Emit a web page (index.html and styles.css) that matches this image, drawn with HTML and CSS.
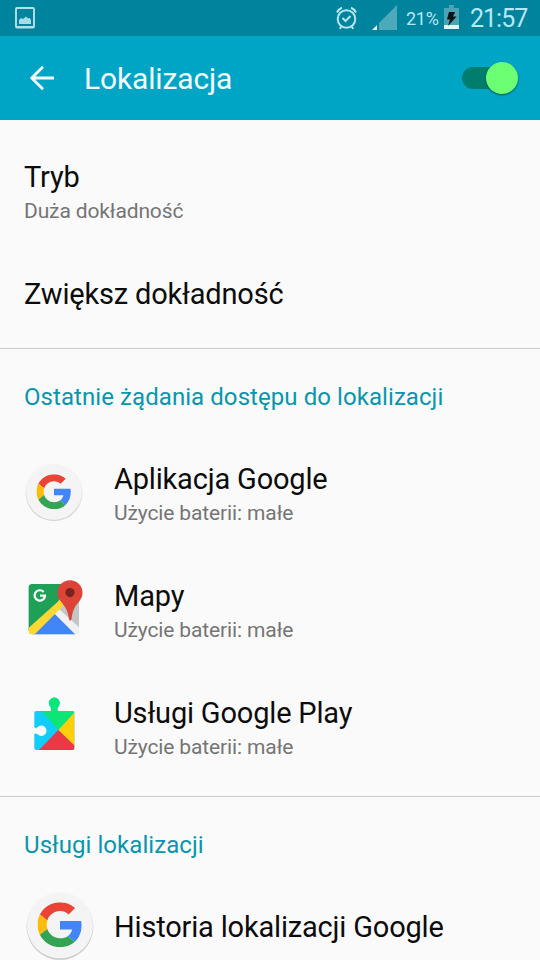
FILE: index.html
```html
<!DOCTYPE html>
<html lang="pl">
<head>
<meta charset="utf-8">
<title>Lokalizacja</title>
<link rel="stylesheet" href="styles.css">
</head>
<body>
<svg class="defs" width="0" height="0">
  <symbol id="g" viewBox="0 0 48 48">
    <path fill="#e94435" d="M24 9.5c3.54 0 6.71 1.22 9.21 3.6l6.85-6.85C35.9 2.38 30.47 0 24 0 14.62 0 6.51 5.38 2.56 13.22l7.98 6.19C12.43 13.72 17.74 9.5 24 9.5z"/>
    <path fill="#4285f4" d="M46.98 24.55c0-1.57-.15-3.09-.38-4.55H24v9.02h12.94c-.58 2.96-2.26 5.48-4.78 7.18l7.73 6c4.51-4.18 7.09-10.36 7.09-17.65z"/>
    <path fill="#fbbc05" d="M10.53 28.59c-.48-1.45-.76-2.99-.76-4.59s.27-3.14.76-4.59l-7.98-6.19C.92 16.46 0 20.12 0 24c0 3.88.92 7.54 2.56 10.78l7.97-6.19z"/>
    <path fill="#34a353" d="M24 48c6.48 0 11.93-2.13 15.89-5.81l-7.73-6c-2.15 1.45-4.92 2.3-8.16 2.3-6.26 0-11.57-4.22-13.47-9.91l-7.98 6.19C6.51 42.62 14.62 48 24 48z"/>
  </symbol>
</svg>
<div class="status">
  <svg class="shot" width="20" height="22" viewBox="0 0 20 22"><rect x="1" y="1" width="18" height="19.6" rx="1" fill="none" stroke="#b5dee7" stroke-width="1.9"/><path d="M1 19h18v2H1z" fill="#b5dee7"/><path d="M4 17v-4l2-2 2 1 3-2.500 2 2 1.500-.8L16 13v4z" fill="#a5dce6"/></svg>
  <svg class="alarm" width="22" height="24" viewBox="0 0 22 24" fill="none" stroke="#b5e5f0" stroke-width="2"><circle cx="10.500" cy="13" r="8.800"/><path d="M1 6.500Q2.500 3 6 1.700M15 1.700Q18.500 3 20 6.500M6.500 12l3 3 5-5M5 20.500l-1 2.500M16 20.500l1 2.500"/></svg>
  <svg class="signal" width="26" height="26" viewBox="0 0 26 26"><path d="M25 0v25H7V18z" fill="#4ba9ba"/><path d="M5 20v5H0z" fill="#e5f5f8"/></svg>
  <span class="pct">21%</span>
  <svg class="battery" width="15" height="24" viewBox="0 0 15 24"><path d="M5 0h5v3h5v17H0V3h5z" fill="#4ba3b3"/><path d="M0 20h15v4H0z" fill="#e5f5f8"/><path d="M5 7h6L9 11.500h3.500L4 21l2-6.500H3z" fill="#061318"/></svg>
  <span class="time">21:57</span>
</div>
<header class="bar">
  <svg class="back" width="24" height="24" viewBox="0 0 24 24" fill="none" stroke="#f2fbfd" stroke-width="2.800"><path d="M24 12H2.500M13 .8L1.800 12 13 23.200"/></svg>
  <h1>Lokalizacja</h1>
  <div class="toggle"><i class="thumb"></i></div>
</header>
<main>
  <div class="row"><div class="text"><div class="title">Tryb</div><div class="sub">Duża dokładność</div></div></div>
  <div class="row single"><div class="text"><div class="title">Zwiększ dokładność</div></div></div>
  <section>
    <h2>Ostatnie żądania dostępu do lokalizacji</h2>
    <div class="row app">
      <svg class="icon" viewBox="0 0 72 72"><circle cx="36" cy="36.800" r="28.400" fill="#d8d8d8"/><circle cx="36" cy="35.800" r="28" fill="#f4f4f4"/><use href="#g" x="18.500" y="18.200" width="35" height="35"/></svg>
      <div class="text"><div class="title">Aplikacja Google</div><div class="sub">Użycie baterii: małe</div></div>
    </div>
    <div class="row app">
      <svg class="icon" viewBox="0 0 72 72">
        <clipPath id="mc"><rect x="10.700" y="11" width="50.300" height="50.300" rx="3.500"/></clipPath>
        <g clip-path="url(#mc)"><path fill="#c4c5c7" d="M10 10h52v52H10z"/><path fill="#1fa057" d="M10 10h42L38 32 10 58z"/><path fill="#4285f4" d="M36.500 40.500L58.500 62.500H14z"/><path fill="#f1f1f1" d="M36.500 40.500L41 36 64 57v8h-3z"/><path fill="#fdd835" d="M6 59L44 25l5 4L15 63H6z"/></g>
        <path d="M25.700 19A5.200 5.200 0 1 0 27 22.600H22" fill="none" stroke="#fff" stroke-width="2.200"/>
        <path fill="#db4437" d="M52 7.200A12.500 12.500 0 0 1 64.500 19.700C64.500 26 60 29 57 34c-2.300 4-3 8-3.500 12-.3 2-2.200 2-2.500 0-.6-4-1.500-8-4-12-3-5-7.500-8-7.500-14.300A12.500 12.500 0 0 1 52 7.200z"/><circle cx="52" cy="19.600" r="4.600" fill="#7b231e"/>
      </svg>
      <div class="text"><div class="title">Mapy</div><div class="sub">Użycie baterii: małe</div></div>
    </div>
    <div class="row app">
      <svg class="icon" viewBox="0 0 72 72">
        <clipPath id="pc"><path d="M18.300 21H32.500q1.500-1.500 0-4a5.500 5.500 0 1 1 7.600 0Q38.600 19.500 40.100 21H54.300a2 2 0 0 1 2 2V58a2 2 0 0 1-2 2H18.300a2 2 0 0 1-2-2V44q1.500-1.200 3.200.2a5.200 5.200 0 1 0 0-7Q17.800 38.500 16.300 37.300V23a2 2 0 0 1 2-2z"/></clipPath>
        <g clip-path="url(#pc)"><path fill="#12ccfa" d="M10 5h50v60H10z"/><path fill="#0ee577" d="M22.700 20V5H60V20L40.300 40z"/><path fill="#ffcf0a" d="M57 22L40.300 40 57 57z"/><path fill="#eb3847" d="M40.300 40L20 61H60V59z"/></g>
      </svg>
      <div class="text"><div class="title">Usługi Google Play</div><div class="sub">Użycie baterii: małe</div></div>
    </div>
  </section>
  <section class="services">
    <h2>Usługi lokalizacji</h2>
    <div class="row app large">
      <svg class="icon" viewBox="0 0 72 72"><circle cx="36" cy="37.600" r="33.400" fill="#cecece"/><circle cx="36" cy="36.300" r="33" fill="#f4f4f4"/><use href="#g" x="13.500" y="13.200" width="45" height="45"/></svg>
      <div class="text"><div class="title">Historia lokalizacji Google</div></div>
    </div>
  </section>
</main>
</body>
</html>
```
FILE: styles.css
```css
* { box-sizing: border-box; }
body { margin: 0; width: 540px; height: 960px; overflow: hidden; background: #fafafa; font-family: Roboto, sans-serif; color: #0c0c0c; }
.defs { position: absolute; }
svg { flex: none; display: block; }
.status { height: 36px; background: #00839d; display: flex; align-items: flex-start; color: #b5e9f5; padding-left: 15px; }
.shot { margin-top: 7px; }
.alarm { margin: 6px 0 0 301px; }
.signal { margin: 5px 0 0 14px; }
.pct { font-size: 18px; line-height: 24px; width: 38px; margin: 7px 0 0 8px; flex: none; letter-spacing: -.3px; }
.battery { margin-top: 5px; }
.time { font-size: 25px; line-height: 30px; margin: 4px 0 0 11px; letter-spacing: -1px; }
.bar { height: 84px; background: #00a5c6; display: flex; align-items: center; padding: 0 22px 0 30px; }
h1 { font-weight: 400; font-size: 30px; line-height: 36px; margin: 2px 0 0 30px; color: #f2fbfd; flex: 1; letter-spacing: -.15px; }
.toggle { width: 56px; height: 22px; border-radius: 11px; background: linear-gradient(#007d6d, #007d6d) 0 0 / 45px 22px no-repeat; display: flex; justify-content: flex-end; align-items: center; }
.thumb { width: 32px; height: 32px; border-radius: 50%; background: #6bff73; box-shadow: 0 1px 2px rgba(0,60,40,.75); flex: none; }
.row { height: 117px; padding: 39px 24px 0; display: flex; align-items: flex-start; }
.single { height: 111px; }
.title { font-size: 29px; line-height: 36px; white-space: nowrap; letter-spacing: -.18px; }
.sub { font-size: 21px; line-height: 24px; margin-top: 4px; color: #757575; white-space: nowrap; letter-spacing: -.13px; }
section { border-top: 1px solid #cbcbcb; height: 448px; }
h2 { font-weight: 400; font-size: 24px; line-height: 28px; height: 73px; margin: 0; padding: 34px 24px 0; color: #0896ad; white-space: nowrap; letter-spacing: .07px; }
.app { padding-left: 18px; }
.icon { width: 72px; height: 72px; margin: -5px 24px 0 0; }
.services { height: 164px; }
.large { height: 90px; padding-left: 24px; overflow: hidden; }
.large .icon { margin: -20px 18px 0 0; }
```
